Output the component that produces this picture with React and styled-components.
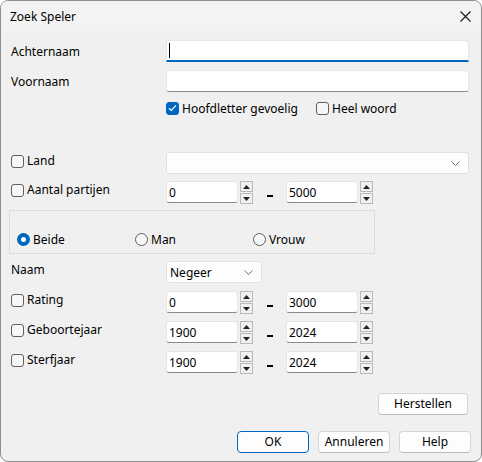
import styled, { createGlobalStyle } from "styled-components"

const Global = createGlobalStyle`
html, body { margin: 0; background: #fff; }
* { box-sizing: border-box; }
`

const Window = styled.div`
width: 482px;
height: 462px;
border: 1px solid #8e8e8e;
border-radius: 8px;
overflow: hidden;
background: #f0f0f0;
font-family: "Noto Sans", sans-serif;
font-size: 12px;
color: #000;
display: flex;
flex-direction: column;
`

const TitleBar = styled.div`
height: 30px;
flex: none;
background: #f3f3f3;
display: flex;
align-items: center;
justify-content: space-between;
padding: 0 10px 0 9px;
`

const Body = styled.div`
flex: 1;
display: flex;
flex-direction: column;
padding: 0 12px 0 10px;
`

const Row = styled.div`
display: flex;
align-items: flex-start;
height: ${p => p.h || 22}px;
margin-top: ${p => p.mt || 0}px;
`

const Label = styled.div`
width: 155px;
flex: none;
height: 16px;
line-height: 16px;
margin-top: ${p => p.off || 0}px;
display: flex;
align-items: center;
gap: 3px;
white-space: nowrap;
`

const Field = styled.div`
width: ${p => p.w || 303}px;
height: 22px;
background: #fff;
border: 1px solid #e5e5e5;
border-bottom: ${p => (p.focus ? "2px solid #0067c0" : "1px solid #8a8a8a")};
border-radius: ${p => (p.focus ? "3px 3px 0 0" : "3px")};
display: flex;
align-items: center;
padding-left: 2px;
`

const Caret = styled.span`
width: 1px;
height: 15px;
background: #000;
`

const Combo = styled.div`
width: ${p => p.w}px;
height: 22px;
background: #fdfdfd;
border: 1px solid #e0e0e0;
border-radius: 3px;
display: flex;
align-items: center;
justify-content: space-between;
padding: 0 8px 0 3px;
`

const Box = styled.span`
width: 13px;
height: 13px;
flex: none;
border-radius: 3px;
border: 1px solid ${p => (p.on ? "#0067c0" : "#5f5f5f")};
background: ${p => (p.on ? "#0067c0" : "#f7f7f7")};
display: flex;
align-items: center;
justify-content: center;
`

const Options = styled.div`
display: flex;
align-items: center;
height: 16px;
`

const Option = styled.div`
display: flex;
align-items: center;
gap: 3px;
width: ${p => p.w}px;
`

const Spin = styled.div`
display: flex;
align-items: flex-start;
gap: 2px;
`

const SpinButtons = styled.div`
display: flex;
flex-direction: column;
gap: 1px;
`

const SpinBtn = styled.div`
width: 13px;
height: 11px;
border: 1px solid #b9b9b9;
background: #f0f0f0;
display: flex;
align-items: center;
justify-content: center;
`

const Dash = styled.div`
width: 33px;
height: 22px;
display: flex;
align-items: flex-end;
justify-content: center;
padding-bottom: 6px;
`

const DashMark = styled.span`
width: 6px;
height: 2px;
background: #000;
margin-left: 1px;
`

const Group = styled.div`
margin: 7px 0 0 -2px;
width: 366px;
height: 44px;
border: 1px solid #dcdcdc;
display: flex;
align-items: center;
padding: 14px 0 0 7px;
`

const Radio = styled.span`
width: 13px;
height: 13px;
flex: none;
border-radius: 50%;
border: ${p => (p.on ? "4px solid #0067c0" : "1px solid #5f5f5f")};
background: ${p => (p.on ? "#fff" : "#f7f7f7")};
`

const Actions = styled.div`
display: flex;
justify-content: flex-end;
gap: ${p => p.gap || 0}px;
margin-top: ${p => p.mt}px;
margin-right: ${p => p.mr || 0}px;
`

const Button = styled.button`
width: ${p => p.w || 72}px;
height: 22px;
font: inherit;
color: #000;
background: #fdfdfd;
border: 1px solid ${p => (p.primary ? "#0067c0" : "#d5d5d5")};
border-bottom-color: ${p => (p.primary ? "#0067c0" : "#bdbdbd")};
border-radius: 4px;
padding: 0;
line-height: 18px;
`

const Check = () => (
  <svg width="9" height="8" viewBox="0 0 9 8">
    <polyline points="1,4.2 3.3,6.4 8,1.4" fill="none" stroke="#fff" strokeWidth="1.2" />
  </svg>
)

const Chevron = () => (
  <svg width="9" height="5" viewBox="0 0 9 5">
    <polyline points="0.5,0.5 4.5,4.5 8.5,0.5" fill="none" stroke="#707070" strokeWidth="1" />
  </svg>
)

const Tri = ({ up }) => (
  <svg width="7" height="4" viewBox="0 0 7 4">
    <polygon points={up ? "3.5,0 7,4 0,4" : "0,0 7,0 3.5,4"} fill="#222" />
  </svg>
)

const Close = () => (
  <svg width="11" height="11" viewBox="0 0 11 11">
    <path d="M0.5 0.5 L10.5 10.5 M10.5 0.5 L0.5 10.5" stroke="#1a1a1a" strokeWidth="1.1" />
  </svg>
)

const SpinField = ({ value }) => (
  <Spin>
    <Field w={72}>{value}</Field>
    <SpinButtons>
      <SpinBtn><Tri up /></SpinBtn>
      <SpinBtn><Tri /></SpinBtn>
    </SpinButtons>
  </Spin>
)

const Range = ({ from, to }) => (
  <>
    <SpinField value={from} />
    <Dash><DashMark /></Dash>
    <SpinField value={to} />
  </>
)

const CheckLabel = ({ children }) => (
  <Label off={1}>
    <Box />
    {children}
  </Label>
)

export default function App() {
  return (
    <>
      <Global />
      <Window>
        <TitleBar>
          <span>Zoek Speler</span>
          <Close />
        </TitleBar>
        <Body>
          <Row mt={9}>
            <Label off={4}>Achternaam</Label>
            <Field focus><Caret /></Field>
          </Row>
          <Row mt={8}>
            <Label off={4}>Voornaam</Label>
            <Field />
          </Row>
          <Row mt={8} h={16}>
            <Label />
            <Options>
              <Option w={150}><Box on><Check /></Box>Hoofdletter gevoelig</Option>
              <Option w={120}><Box />Heel woord</Option>
            </Options>
          </Row>
          <Row mt={36}>
            <CheckLabel>Land</CheckLabel>
            <Combo w={303}><span /><Chevron /></Combo>
          </Row>
          <Row mt={7}>
            <CheckLabel>Aantal partijen</CheckLabel>
            <Range from="0" to="5000" />
          </Row>
          <Group>
            <Option w={118}><Radio on />Beide</Option>
            <Option w={118}><Radio />Man</Option>
            <Option w={118}><Radio />Vrouw</Option>
          </Group>
          <Row mt={7}>
            <Label off={1}>Naam</Label>
            <Combo w={96}><span>Negeer</span><Chevron /></Combo>
          </Row>
          <Row mt={8}>
            <CheckLabel>Rating</CheckLabel>
            <Range from="0" to="3000" />
          </Row>
          <Row mt={8}>
            <CheckLabel>Geboortejaar</CheckLabel>
            <Range from="1900" to="2024" />
          </Row>
          <Row mt={8}>
            <CheckLabel>Sterfjaar</CheckLabel>
            <Range from="1900" to="2024" />
          </Row>
          <Actions mt={20} mr={1}>
            <Button w={90}>Herstellen</Button>
          </Actions>
          <Actions mt={16} gap={9} mr={-2}>
            <Button primary>OK</Button>
            <Button>Annuleren</Button>
            <Button>Help</Button>
          </Actions>
        </Body>
      </Window>
    </>
  )
}
